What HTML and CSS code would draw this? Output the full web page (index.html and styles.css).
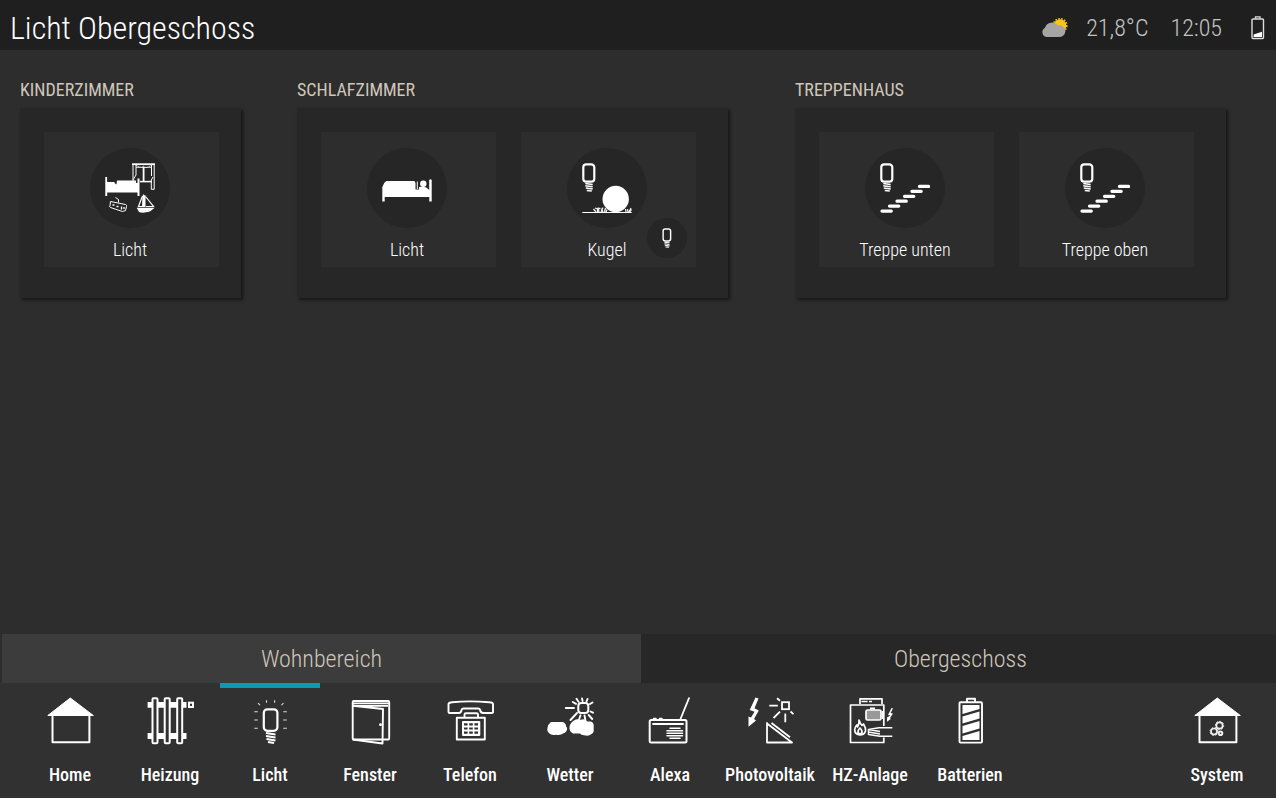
FILE: index.html
```html
<!DOCTYPE html>
<html lang="de">
<head>
<meta charset="utf-8">
<meta name="viewport" content="width=device-width, initial-scale=1">
<title>Licht Obergeschoss</title>
<link rel="stylesheet" href="styles.css">
</head>
<body>
<svg class="defs" aria-hidden="true">
  <symbol id="bulb" viewBox="0 0 14 29">
    <rect x="1.3" y="1.3" width="11" height="17.4" rx="3" fill="none" stroke="#fff" stroke-width="2.2"/>
    <path d="M3.3 20.5l7.400 1M3.300 22.8l7.400 1M3.800 25.1l6.900 1M4.800 27.4l5 .6" fill="none" stroke="#fff" stroke-width="1.5"/>
  </symbol>
  <symbol id="stairs" viewBox="0 0 50 50">
    <use href="#bulb" width="14" height="29"/>
    <path d="M2 48.100h9.300M9.500 43.100h9.300M17 38.200h9.300M24.500 33.300h9.300M31.900 28.300h9.300M39.400 23.400h9.300" fill="none" stroke="#fff" stroke-width="3.200" stroke-linecap="round"/>
  </symbol>
  <symbol id="house" viewBox="0 0 48 48">
    <path d="M24.300 1L47.300 18.500H1.800Z" fill="#fff" stroke="#fff" stroke-linejoin="round"/>
    <path d="M6.500 18V45.300H43.400V18" fill="none" stroke="#fff" stroke-width="2" stroke-linejoin="round"/>
  </symbol>
</svg>

<header class="topbar">
  <h1 class="topbar-title">Licht Obergeschoss</h1>
  <div class="status">
    <svg class="status-weather" viewBox="0 0 28 22" role="img" aria-label="Leicht bewölkt">
      <circle cx="20" cy="8.500" r="6.300" fill="#fcc419"/>
      <circle cx="20" cy="8.500" r="6.800" fill="none" stroke="#fcc419" stroke-width="1.500" stroke-dasharray="1.600 1.400"/>
      <path d="M6.500 20A5 5 0 0 1 5 10.700A7.500 7.500 0 0 1 18 8.500A6 6 0 0 1 25.500 14Q24.500 20 19 20Z" fill="#a5a5a5"/>
    </svg>
    <span class="status-temp">21,8°C</span>
    <time class="status-time">12:05</time>
    <svg class="status-battery" viewBox="0 0 14 25" role="img" aria-label="Batterie schwach">
      <rect x="1" y="3" width="11.500" height="19.500" rx="1" fill="none" stroke="#ddd" stroke-width="1.400"/>
      <path d="M4.500 2.500V.8h4.500v1.700" fill="none" stroke="#ddd" stroke-width="1.300"/>
      <path d="M2.600 18.500L11 15.800V21H2.600Z" fill="#fff"/>
    </svg>
  </div>
</header>

<main class="rooms">
  <section class="room">
    <h2 class="room-title">Kinderzimmer</h2>
    <div class="card card-single">
      <button class="tile" type="button">
        <span class="disc"><svg class="disc-icon" viewBox="0 0 50 50" aria-hidden="true">
          <g fill="none" stroke="#fff">
            <path d="M27 1.200H50" stroke-width="1.800"/>
            <path d="M28 1V18M49.200 1V26.300H46.300V17L48 14M31 2V12L28 17M46.500 2V13" stroke-width="1"/>
            <path d="M31 2.500Q38 6 38.300 3Q40 6 46.500 2.500M31 4.500h15" stroke-width=".7"/>
            <path d="M38.600 4V18" stroke-width="1.800"/><path d="M35 18.600H47" stroke-width="1.500"/>
            <path d="M5.500 38.500L20.500 41.500Q22 42 21.500 43.500L20.500 47.500L17.500 48.500L5.500 44.500Q4 44 5 42.500ZM13.500 39.500V36.500L10.500 34.500" stroke-width="1"/>
            <path d="M7.500 42h2M11.500 43.500h2M16.500 43.500v3M19 44v2" stroke-width="1.300"/>
            <path d="M38.500 31.500V44M37.500 33L33.500 43.500H38M40.500 33.500L48.500 43.500H41" stroke-width="1.200"/>
          </g>
          <g fill="#fff"><path d="M.3 14h1.800v5H9.500V20l2 1.500L12 17.500H31V20h1.500V15.500h2V33h-2V29.500H2.200V33H.3Z"/><path d="M37.500 33l3-1V44H37ZM31.700 44.700H49.700L45 48.500Q38 50.500 34 49Z"/></g>
        </svg></span>
        <span class="tile-label">Licht</span>
      </button>
    </div>
  </section>

  <section class="room">
    <h2 class="room-title">Schlafzimmer</h2>
    <div class="card">
      <button class="tile" type="button">
        <span class="disc"><svg class="disc-icon" viewBox="0 0 50 50" aria-hidden="true">
          <path d="M4.500 18H32.500L33.500 20V26.500H37V24Q44 22.500 47.200 27V17Q48.400 15.500 49.700 17V38.500H47.300V34H2.700V38.500H.3V24L2.500 19.500Z" fill="#fff"/>
          <circle cx="41.300" cy="20.800" r="3.200" fill="#fff"/>
          <path d="M35.300 18.500V26" stroke="#fff" stroke-width="1"/>
        </svg></span>
        <span class="tile-label">Licht</span>
      </button>
      <div class="tile-wrap">
        <button class="tile" type="button">
          <span class="disc"><svg class="disc-icon" viewBox="0 0 50 50" aria-hidden="true">
            <use href="#bulb" width="14" height="29"/>
            <circle cx="33.700" cy="36" r="13.200" fill="#fff"/>
            <path d="M.3 49.500H49.700" stroke="#fff" stroke-width="1"/>
            <path d="M14 49L11.500 46M15.500 49V46L13 45M17 49L16 44.500M19 49L21 44.500M17 45.500h1.500M21 49L19.500 45.500M22.500 49L23.500 45M24 49L25 46.500M44 49L43.500 46M46 49L45.500 46M47 49L49 45M47.500 49L49.500 46.500" fill="none" stroke="#eee" stroke-width="1.300"/>
          </svg></span>
          <span class="tile-label">Kugel</span>
        </button>
        <button class="badge" type="button" aria-label="Lampe schalten"><svg class="badge-icon" viewBox="0 0 14 29" aria-hidden="true"><use href="#bulb"/></svg></button>
      </div>
    </div>
  </section>

  <section class="room">
    <h2 class="room-title">Treppenhaus</h2>
    <div class="card">
      <button class="tile" type="button">
        <span class="disc"><svg class="disc-icon" aria-hidden="true"><use href="#stairs"/></svg></span>
        <span class="tile-label">Treppe unten</span>
      </button>
      <button class="tile" type="button">
        <span class="disc"><svg class="disc-icon" aria-hidden="true"><use href="#stairs"/></svg></span>
        <span class="tile-label">Treppe oben</span>
      </button>
    </div>
  </section>
</main>

<div class="tabs">
  <button class="tab tab-active" type="button">Wohnbereich</button>
  <button class="tab" type="button">Obergeschoss</button>
</div>

<nav class="nav">
  <a class="nav-item" href="#home"><svg class="nav-icon" aria-hidden="true"><use href="#house"/></svg>Home</a>
  <a class="nav-item" href="#heizung"><svg class="nav-icon" viewBox="0 0 48 48" aria-hidden="true">
    <path d="M1.600 5H40.500V10.800H1.600ZM1.600 36H40.500V42H1.600Z" fill="#fff"/>
    <g fill="#313131" stroke="#fff" stroke-width="2"><rect x="6.500" y="1.200" width="5" height="45" rx="1"/><rect x="18.700" y="1.200" width="5" height="45" rx="1"/><rect x="31.200" y="1.200" width="5" height="45" rx="1"/><rect x="43" y="5.700" width="4" height="4.300"/></g>
  </svg>Heizung</a>
  <a class="nav-item nav-item-active" href="#licht" aria-current="page"><svg class="nav-icon" viewBox="0 0 48 48" aria-hidden="true">
    <rect x="17.800" y="12.300" width="13.600" height="21.500" rx="3.500" fill="none" stroke="#fff" stroke-width="2.200"/>
    <path d="M20 36l9.500 1.500M20 39l9.500 1.500M20.500 42l9 1.500M22 45l6 1" fill="none" stroke="#fff" stroke-width="2"/>
    <path d="M8.300 14.700h3.500M8.300 23h3.500M8.300 31.300h3.500M37.300 14.700h3.500M37.300 23h3.500M37.300 31.300h3.500M20.500 3.200v2.500M28.600 3.200v2.500M12 6l2 2.200M37.500 6l-2 2.200" stroke="#ddd" stroke-width="1.100"/>
  </svg>Licht</a>
  <a class="nav-item" href="#fenster"><svg class="nav-icon" viewBox="0 0 48 48" aria-hidden="true">
    <g fill="none" stroke="#fff" stroke-width="1.900" stroke-linejoin="round"><rect x="6.700" y="4" width="36.500" height="38.500" rx="1"/><path d="M6.700 8.700L37 12L36.500 46.500L6.700 42.500M7 8.700H42"/><path d="M7 6.300H43" stroke-width="1.500"/></g><circle cx="34.500" cy="27.700" r="1.400" fill="#fff"/>
  </svg>Fenster</a>
  <a class="nav-item" href="#telefon"><svg class="nav-icon" viewBox="0 0 48 48" aria-hidden="true">
    <g fill="none" stroke="#fff" stroke-width="1.900" stroke-linejoin="round"><path d="M2.500 7Q2.800 5.500 6 5.200Q24 3.500 43 5.200Q47 5.500 47 7V15.500Q47 16 46 16H37Q34.500 16 34 12.500Q33.700 11.500 32 11.500H17.500Q16 11.500 15.500 13Q15 16 13 16H3.500Q2.500 16 2.500 15Z"/><path d="M18.500 20V17.500Q18.500 16.300 20 16.300H30.500Q32 16.300 32 17.500V20"/><rect x="10.800" y="20.800" width="28" height="21.700"/></g>
    <rect x="16" y="24" width="18.300" height="15" rx="1" fill="#fff"/><path d="M18 27.300h14M18 31.500h14M18 35.700h14" stroke="#313131" stroke-width="2.200" stroke-dasharray="3.600 1.600"/>
  </svg>Telefon</a>
  <a class="nav-item" href="#wetter"><svg class="nav-icon" viewBox="0 0 48 48" aria-hidden="true">
    <rect x="32.300" y="6" width="10" height="10" rx="3" fill="none" stroke="#fff" stroke-width="2"/>
    <path d="M19.800 11H28M26.800 5l3.200 1.800M30.500 1.800l2 3M36 1.500l.6 2.500M41.500 2l-1 2.500M46.500 5.500L44 7M44.500 14.500l2.500 1.200M42.700 18l3.500 4M38.500 18.500l.8 4M34.500 18.300l-1.500 4.500M31 16L24.500 23" fill="none" stroke="#fff" stroke-width="1.900" stroke-linecap="round"/>
    <path d="M5 25H17Q20.500 27 20 29.500Q22 31 20.500 34Q19 36 17 36.500Q15 38.500 10 37.800Q5 38.500 3.500 36.500Q.5 34 1.500 31Q2 27 5 25ZM28 23.500Q31 21.500 34 23Q39 21 41.500 24.500H45Q48 26 47.700 29V34Q47.500 36 45.500 37Q43 39.500 38 38.300Q35 38 34 36.500H27Q23 34.500 23.500 30Q24 26 28 23.500Z" fill="#fff"/>
  </svg>Wetter</a>
  <a class="nav-item" href="#alexa"><svg class="nav-icon" viewBox="0 0 48 48" aria-hidden="true">
    <g fill="none" stroke="#fff" stroke-linecap="round"><rect x="3.700" y="23" width="36.800" height="22.500" rx="1.500" stroke-width="2"/><path d="M7 27H37M34.500 22L43 1.200" stroke-width="1.800"/><path d="M7.500 21.500h2.500M13.500 21.500h2.500" stroke-width="1.500"/><path d="M24 31.200H34M21 33.700H36.500M21 36.200H36.500M21 38.700H36.500M24 41.200H34" stroke-width="1.500"/></g>
  </svg>Alexa</a>
  <a class="nav-item" href="#photovoltaik"><svg class="nav-icon" viewBox="0 0 48 48" aria-hidden="true">
    <path d="M9.500 .5L12.500 1.500L8.500 11.300L12.800 13.500L8 22L10 23.500L2.500 29.800L2.500 19.500L5 20.500L8.500 14.700L3.700 13Z" fill="#fff"/>
    <g fill="none" stroke="#fff" stroke-width="1.800"><rect x="36" y="5.200" width="7" height="7"/><path d="M23.300 8.700H31.800M31 1.300l3 2.500M39.300 16.500V25.300M34 14.700L27.500 21M44.500 14.500l3 2.700M25.500 26L44 40.300"/><path d="M21 26V45.500H46L21 26.500Z" stroke-linejoin="round"/></g>
  </svg>Photovoltaik</a>
  <a class="nav-item" href="#hz-anlage"><svg class="nav-icon" viewBox="0 0 48 48" aria-hidden="true">
    <g fill="none" stroke="#fff" stroke-width="1.700" stroke-linejoin="round"><path d="M37.800 29V8H4.500V45.500H37.800V40.500M14 7V1.800H36V7"/><path d="M15.500 4.500h6M23 4.500h3" stroke-width="1.700"/><rect x="20" y="13" width="15" height="10" rx="1.500" fill="#999"/><path d="M24 11.500h5M36.800 14v8" stroke-width="2"/><path d="M13 23Q14.500 27 16 28.500L17.500 27Q20 31 19.500 34Q18.500 38 13.500 38Q8.500 37 8.700 32.500Q9 29.500 11 28L11.500 30Q13.500 27 13 23ZM14 31Q11 34 12.500 36.500L15.500 36.500Q17 34 14 31Z"/><path d="M46.300 30.700H33L22.500 32.500M22.500 32.500L34 34.500M22.500 35L34 37M22.500 37.500L34 39.300H46.300M22.500 32V38" stroke-width="1.500"/></g>
    <path d="M45.500 11L42 18L44.500 18.500L41 20.500V24.700L44.800 22L44 21L47 16.500L44.500 16L47 11.500Z" fill="#fff"/>
  </svg>HZ-Anlage</a>
  <a class="nav-item" href="#batterien"><svg class="nav-icon" viewBox="0 0 48 48" aria-hidden="true">
    <g fill="none" stroke="#fff" stroke-width="1.900" stroke-linejoin="round"><rect x="13.500" y="5.300" width="22.500" height="40.300" rx="1"/><path d="M21 5V1.800H29V5"/></g>
    <path d="M16.500 8H33.500V12L16.500 17ZM16.500 19.500L33.500 14.500V21.500L16.500 26.500ZM16.500 29L33.500 24V31.500L16.500 36.500ZM16.500 39L33.500 34V43H16.500Z" fill="#fff"/>
  </svg>Batterien</a>
  <a class="nav-item nav-item-last" href="#system"><svg class="nav-icon" viewBox="0 0 48 48" aria-hidden="true">
    <use href="#house"/>
    <g fill="none" stroke="#eee"><circle cx="26.500" cy="28.500" r="3.200" stroke-width="1.700"/><circle cx="26.500" cy="28.500" r="4.200" stroke-width="1" stroke-dasharray="1.500 1.700"/><circle cx="21" cy="34.500" r="3" stroke-width="1.700"/><circle cx="21" cy="34.500" r="4" stroke-width="1" stroke-dasharray="1.500 1.700"/><circle cx="27.500" cy="36.300" r="1.800" stroke-width="2"/></g>
  </svg>System</a>
</nav>
</body>
</html>
```

FILE: styles.css
```css
* {
  box-sizing: border-box;
}

body {
  display: flex;
  flex-direction: column;
  min-height: 100vh;
  margin: 0;
  background: #2d2d2d;
  color: #fff;
  font-family: "Roboto Condensed", "Liberation Sans Narrow", Roboto, sans-serif;
  font-size: 18px;
}

button {
  border: 0;
  padding: 0;
  color: inherit;
  font: inherit;
  cursor: pointer;
}

svg {
  display: block;
  flex: none;
}

.defs {
  position: absolute;
  width: 0;
  height: 0;
}

.topbar {
  display: flex;
  align-items: center;
  justify-content: space-between;
  height: 50px;
  padding: 6px 11px 0 10px;
  background: #1f1f1f;
}

.topbar-title {
  margin: 0;
  font-size: 32px;
  font-weight: 300;
  line-height: 44px;
}

.status {
  display: flex;
  align-items: center;
  color: #c4c4c4;
  font-size: 24px;
  font-weight: 300;
  line-height: 46px;
}

.status-weather {
  width: 28px;
  height: 22px;
  margin-right: 18px;
}

.status-temp {
  margin-right: 22px;
}

.status-time {
  margin-right: 29px;
}

.status-battery {
  width: 14px;
  height: 25px;
}

.rooms {
  display: grid;
  flex: 1;
  grid-template-columns: 277fr 498fr 481fr;
  align-items: start;
  padding: 28px 0 0 20px;
}

.room-title {
  margin: 0 0 6px;
  color: #cfc6ba;
  font-size: 18px;
  font-weight: 400;
  line-height: 24px;
  text-transform: uppercase;
}

.card {
  display: flex;
  gap: 25px;
  width: max-content;
  padding: 24px 32px 31px 24px;
  background: #272727;
  box-shadow: 2px 2px 3px #161616;
}

.card-single {
  padding-right: 22px;
}

.tile-wrap {
  position: relative;
}

.tile {
  display: flex;
  flex-direction: column;
  align-items: center;
  width: 175px;
  padding: 16px 3px 5px 0;
  background: #2d2d2d;
}

.disc {
  display: grid;
  place-items: center;
  width: 80px;
  height: 80px;
  border-radius: 50%;
  background: #262626;
}

.disc-icon {
  width: 50px;
  height: 50px;
}

.tile-label {
  margin-top: 10px;
  font-weight: 300;
  line-height: 24px;
}

.badge {
  position: absolute;
  right: 9px;
  bottom: 9px;
  display: grid;
  place-items: center;
  width: 40px;
  height: 40px;
  border-radius: 50%;
  background: #262626;
}

.badge-icon {
  width: 10px;
  height: 20px;
}

.tabs {
  display: grid;
  grid-template-columns: 639fr 635fr;
  padding-left: 2px;
}

.tab {
  height: 49px;
  padding-left: 4px;
  background: #272727;
  color: #cfc6ba;
  font-size: 24px;
  font-weight: 300;
}

.tab-active {
  padding-left: 0;
  background: #3c3c3c;
}

.nav {
  display: flex;
  padding: 0 9px 11px 20px;
  background: #313131;
}

.nav-item {
  display: flex;
  flex-direction: column;
  align-items: center;
  width: 100px;
  padding-top: 9px;
  border-top: 5px solid transparent;
  color: #fff;
  font-weight: 500;
  line-height: 24px;
  text-decoration: none;
  white-space: nowrap;
}

.nav-item-active {
  border-top-color: #0a9bb2;
}

.nav-item-last {
  margin-left: auto;
}

.nav-icon {
  width: 48px;
  height: 48px;
  margin-bottom: 18px;
}
```
